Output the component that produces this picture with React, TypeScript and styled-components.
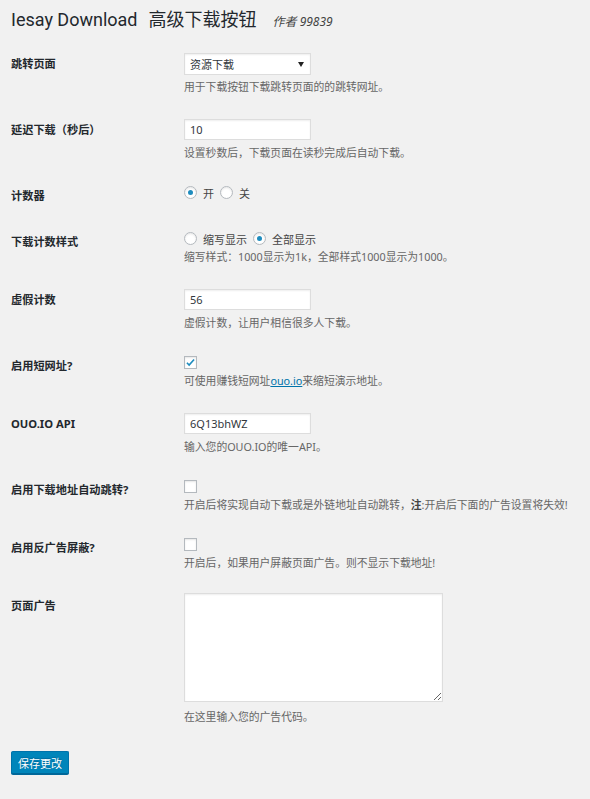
import { FC, ReactNode } from 'react';
import styled, { createGlobalStyle } from 'styled-components';

const GlobalStyle = createGlobalStyle`
  html, body {
    margin: 0;
    padding: 0;
    background: #f1f1f1;
  }
  body {
    font-family: "Noto Sans", "Noto Sans CJK SC", sans-serif;
    color: #444;
    font-size: 11px;
  }
`;

const Page = styled.div`
  padding: 8px 11px 24px;
  width: 568px;
`;

const Title = styled.h1`
  margin: 0 0 8px;
  font-family: Roboto, "Noto Sans CJK SC", sans-serif;
  font-size: 18px;
  font-weight: 400;
  line-height: 23px;
  color: #23282d;
  display: flex;
  align-items: baseline;
  white-space: nowrap;
`;

const TitleCn = styled.span`
  margin-left: 11px;
`;

const Author = styled.em`
  margin-left: 16px;
  font-family: "Noto Sans", "Noto Sans CJK SC", sans-serif;
  font-size: 12px;
  color: #444;
`;

const FormTable = styled.div`
  display: flex;
  flex-direction: column;
`;

const Row = styled.div`
  display: grid;
  grid-template-columns: 173px 1fr;
`;

const Label = styled.div`
  padding: 16px 0;
  font-size: 11.2px;
  font-weight: 700;
  line-height: 14px;
  color: #23282d;
`;

const Field = styled.div<{ $top?: number }>`
  padding: ${(p) => p.$top ?? 12}px 0 12px;
  display: flex;
  flex-direction: column;
  align-items: flex-start;
`;

const Description = styled.p<{ $gap?: number }>`
  margin: ${(p) => p.$gap ?? 4}px 0 0;
  font-size: 10.8px;
  line-height: 16px;
  color: #666;
  white-space: nowrap;

  b {
    font-weight: 700;
    color: #444;
  }
`;

const Link = styled.a`
  color: #0073aa;
  text-decoration: underline;
`;

const TextInput = styled.input`
  box-sizing: border-box;
  width: 127px;
  height: 21px;
  margin: 0;
  padding: 0 5px;
  border: 1px solid #ddd;
  background: #fff;
  box-shadow: inset 0 1px 2px rgba(0, 0, 0, 0.07);
  font-family: inherit;
  font-size: 11px;
  color: #32373c;
  outline: none;
`;

const SelectWrap = styled.div`
  position: relative;
  width: 127px;
  height: 22px;
`;

const SelectBox = styled.select`
  box-sizing: border-box;
  width: 100%;
  height: 100%;
  margin: 0;
  padding: 0 18px 0 5px;
  appearance: none;
  border: 1px solid #ddd;
  border-radius: 0;
  background: #fff;
  box-shadow: inset 0 1px 2px rgba(0, 0, 0, 0.07);
  font-family: inherit;
  font-size: 11px;
  color: #32373c;
  outline: none;
`;

const SelectArrow = styled.span`
  position: absolute;
  right: 7px;
  top: 9px;
  width: 0;
  height: 0;
  border-left: 3px solid transparent;
  border-right: 3px solid transparent;
  border-top: 5px solid #222;
  pointer-events: none;
`;

const ChoiceLine = styled.div`
  display: flex;
  align-items: center;
  height: 15px;
  font-size: 11px;
  color: #444;
`;

const Choice = styled.label`
  display: inline-flex;
  align-items: center;
  gap: 6px;
  margin-right: 6px;
`;

const Radio = styled.span<{ $on?: boolean }>`
  box-sizing: border-box;
  width: 13px;
  height: 13px;
  border: 1px solid #b4b9be;
  border-radius: 50%;
  background: #fff;
  box-shadow: inset 0 1px 2px rgba(0, 0, 0, 0.1);
  display: inline-flex;
  align-items: center;
  justify-content: center;

  &::after {
    content: '';
    display: ${(p) => (p.$on ? 'block' : 'none')};
    width: 5px;
    height: 5px;
    border-radius: 50%;
    background: #1e8cbe;
  }
`;

const Checkbox = styled.span`
  box-sizing: border-box;
  width: 13px;
  height: 13px;
  border: 1px solid #b4b9be;
  background: #fff;
  box-shadow: inset 0 1px 2px rgba(0, 0, 0, 0.1);
  display: inline-flex;
  align-items: center;
  justify-content: center;
`;

const TextArea = styled.textarea`
  box-sizing: border-box;
  display: block;
  width: 259px;
  height: 109px;
  margin: 0;
  border: 1px solid #ddd;
  background: #fff;
  box-shadow: inset 0 1px 2px rgba(0, 0, 0, 0.07);
  outline: none;
`;

const Submit = styled.div`
  padding-top: 14px;
`;

const PrimaryButton = styled.button`
  box-sizing: border-box;
  height: 23px;
  padding: 0 6px;
  border: 1px solid #0073aa;
  border-bottom-color: #006799;
  border-radius: 2px;
  background: #0085ba;
  box-shadow: 0 1px 0 #006799;
  color: #fff;
  font-family: inherit;
  font-size: 11px;
  text-shadow: 0 -1px 1px #006799;
  cursor: pointer;
`;

const CheckBox: FC<{ checked?: boolean }> = ({ checked }) => (
  <Checkbox>
    {checked && (
      <svg width="11" height="11" viewBox="0 0 20 20">
        <path d="M3.5 10.5l4 4 9-10" fill="none" stroke="#1e8cbe" strokeWidth="3" />
      </svg>
    )}
  </Checkbox>
);

const SettingRow: FC<{ label: string; top?: number; children: ReactNode }> = ({
  label,
  top,
  children,
}) => (
  <Row>
    <Label>{label}</Label>
    <Field $top={top}>{children}</Field>
  </Row>
);

export default function App() {
  return (
    <>
      <GlobalStyle />
      <Page>
        <Title>
          Iesay Download<TitleCn>高级下载按钮</TitleCn>
          <Author>作者 99839</Author>
        </Title>
        <FormTable>
          <SettingRow label="跳转页面">
            <SelectWrap>
              <SelectBox defaultValue="res">
                <option value="res">资源下载</option>
              </SelectBox>
              <SelectArrow />
            </SelectWrap>
            <Description>用于下载按钮下载跳转页面的的跳转网址。</Description>
          </SettingRow>
          <SettingRow label="延迟下载（秒后）">
            <TextInput defaultValue="10" />
            <Description $gap={5}>设置秒数后，下载页面在读秒完成后自动下载。</Description>
          </SettingRow>
          <SettingRow label="计数器">
            <ChoiceLine>
              <Choice>
                <Radio $on />开
              </Choice>
              <Choice>
                <Radio />关
              </Choice>
            </ChoiceLine>
          </SettingRow>
          <SettingRow label="下载计数样式">
            <ChoiceLine>
              <Choice>
                <Radio />缩写显示
              </Choice>
              <Choice>
                <Radio $on />全部显示
              </Choice>
            </ChoiceLine>
            <Description $gap={3}>缩写样式：1000显示为1k，全部样式1000显示为1000。</Description>
          </SettingRow>
          <SettingRow label="虚假计数">
            <TextInput defaultValue="56" />
            <Description $gap={5}>虚假计数，让用户相信很多人下载。</Description>
          </SettingRow>
          <SettingRow label="启用短网址?">
            <ChoiceLine>
              <CheckBox checked />
            </ChoiceLine>
            <Description $gap={3}>
              可使用赚钱短网址<Link href="#">ouo.io</Link>来缩短演示地址。
            </Description>
          </SettingRow>
          <SettingRow label="OUO.IO API">
            <TextInput defaultValue="6Q13bhWZ" />
            <Description $gap={5}>输入您的OUO.IO的唯一API。</Description>
          </SettingRow>
          <SettingRow label="启用下载地址自动跳转?">
            <ChoiceLine>
              <CheckBox />
            </ChoiceLine>
            <Description $gap={3}>
              开启后将实现自动下载或是外链地址自动跳转，<b>注</b>:开启后下面的广告设置将失效!
            </Description>
          </SettingRow>
          <SettingRow label="启用反广告屏蔽?">
            <ChoiceLine>
              <CheckBox />
            </ChoiceLine>
            <Description $gap={3}>开启后，如果用户屏蔽页面广告。则不显示下载地址!</Description>
          </SettingRow>
          <SettingRow label="页面广告" top={10}>
            <TextArea />
            <Description $gap={7}>在这里输入您的广告代码。</Description>
          </SettingRow>
        </FormTable>
        <Submit>
          <PrimaryButton>保存更改</PrimaryButton>
        </Submit>
      </Page>
    </>
  );
}
